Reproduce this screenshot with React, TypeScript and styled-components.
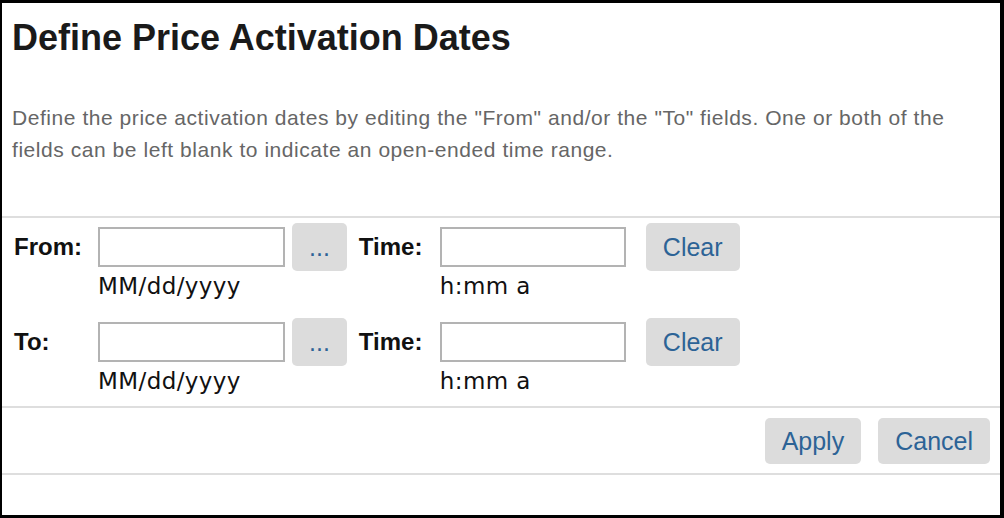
import React, { useState } from 'react';
import styled, { createGlobalStyle } from 'styled-components';

const GlobalStyle = createGlobalStyle`
  html, body {
    margin: 0;
    padding: 0;
    background: #ffffff;
  }

  * {
    box-sizing: border-box;
  }
`;

const Dialog = styled.div`
  width: 1004px;
  height: 518px;
  overflow: hidden;
  background: #ffffff;
  border-style: solid;
  border-color: #000000;
  border-width: 3px 4px 3px 2px;
  display: flex;
  flex-direction: column;
  font-family: 'Liberation Sans', Arial, sans-serif;
`;

const Header = styled.div`
  padding: 13px 12px 0 10px;
`;

const Title = styled.h1`
  margin: 0;
  font-size: 36px;
  line-height: 44px;
  font-weight: 700;
  color: #1a1a1a;
`;

const Description = styled.p`
  margin: 42px 0 0 0;
  font-size: 21px;
  line-height: 32px;
  letter-spacing: 0.55px;
  color: #666666;
`;

const Divider = styled.hr`
  margin: 0;
  border: none;
  height: 2px;
  background: #dedede;
  flex-shrink: 0;
`;

const TopDivider = styled(Divider)`
  margin-top: 50px;
`;

const FormSection = styled.div`
  padding: 5px 12px 11px 12px;
  display: flex;
  flex-direction: column;
  gap: 18px;
`;

const FieldRow = styled.div`
  display: flex;
  align-items: flex-start;
`;

const FieldLabel = styled.label<{ $width: number; $offset?: number }>`
  width: ${p => p.$width}px;
  margin-left: ${p => p.$offset ?? 0}px;
  font-size: 24px;
  font-weight: 700;
  line-height: 48px;
  color: #111111;
  flex-shrink: 0;
`;

const FieldStack = styled.div<{ $width: number }>`
  width: ${p => p.$width}px;
  display: flex;
  flex-direction: column;
  flex-shrink: 0;
`;

const TextInput = styled.input`
  margin-top: 4px;
  height: 40px;
  width: 100%;
  border: 2px solid #b3b3b3;
  background: #ffffff;
  font-family: 'Liberation Sans', Arial, sans-serif;
  font-size: 20px;
  padding: 0 6px;
  outline: none;

  &:focus {
    border-color: #7a9cc6;
  }
`;

const FormatHint = styled.span`
  margin-top: 6px;
  font-family: 'DejaVu Sans', Verdana, sans-serif;
  font-size: 23px;
  line-height: 27px;
  letter-spacing: 0.4px;
  color: #111111;
`;

const Button = styled.button<{ $offset?: number; $height?: number }>`
  margin-left: ${p => p.$offset ?? 0}px;
  height: ${p => p.$height ?? 48}px;
  padding: 0 17px;
  border: none;
  border-radius: 5px;
  background: #dcdcdc;
  color: #2c6396;
  font-family: 'Liberation Sans', Arial, sans-serif;
  font-size: 25px;
  cursor: pointer;
  flex-shrink: 0;

  &:hover {
    background: #d0d0d0;
  }
`;

const Footer = styled.div`
  padding: 10px 10px 9px 10px;
  display: flex;
  justify-content: flex-end;
  gap: 17px;
`;

type RangeField = { date: string; time: string };

const emptyField: RangeField = { date: '', time: '' };

const App: React.FC = () => {
  const [from, setFrom] = useState<RangeField>(emptyField);
  const [to, setTo] = useState<RangeField>(emptyField);

  const rows = [
    { id: 'from', label: 'From:', value: from, set: setFrom },
    { id: 'to', label: 'To:', value: to, set: setTo },
  ];

  return (
    <>
      <GlobalStyle />
      <Dialog>
        <Header>
          <Title>Define Price Activation Dates</Title>
          <Description>
            Define the price activation dates by editing the "From" and/or the "To" fields. One or both of the
            fields can be left blank to indicate an open-ended time range.
          </Description>
        </Header>

        <TopDivider />

        <FormSection>
          {rows.map(row => (
            <FieldRow key={row.id}>
              <FieldLabel $width={84} htmlFor={`${row.id}-date`}>{row.label}</FieldLabel>
              <FieldStack $width={187}>
                <TextInput
                  id={`${row.id}-date`}
                  value={row.value.date}
                  onChange={e => row.set({ ...row.value, date: e.target.value })}
                />
                <FormatHint>MM/dd/yyyy</FormatHint>
              </FieldStack>
              <Button $offset={7}>...</Button>
              <FieldLabel $width={81} $offset={12} htmlFor={`${row.id}-time`}>Time:</FieldLabel>
              <FieldStack $width={186}>
                <TextInput
                  id={`${row.id}-time`}
                  value={row.value.time}
                  onChange={e => row.set({ ...row.value, time: e.target.value })}
                />
                <FormatHint>h:mm a</FormatHint>
              </FieldStack>
              <Button $offset={20} onClick={() => row.set(emptyField)}>Clear</Button>
            </FieldRow>
          ))}
        </FormSection>

        <Divider />

        <Footer>
          <Button $height={46}>Apply</Button>
          <Button $height={46}>Cancel</Button>
        </Footer>

        <Divider />
      </Dialog>
    </>
  );
};

export default App;
